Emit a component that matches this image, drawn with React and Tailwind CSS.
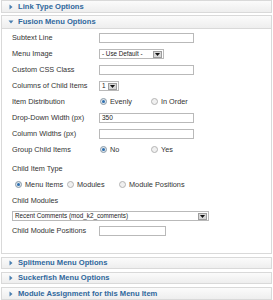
import React from 'react';

const font = { fontFamily: '"Liberation Sans", Arial, sans-serif' };

const Arrow = ({ open }) => (
  <svg width="6" height="6" viewBox="0 0 6 6" className="shrink-0">
    {open ? <path d="M0.5 1.5 H5.5 L3 4.5 Z" fill="#4a7fb0" /> : <path d="M1.5 0.5 V5.5 L4.5 3 Z" fill="#4a7fb0" />}
  </svg>
);

const Header = ({ title, open, className = '' }) => (
  <div className={`flex items-center gap-[4px] pl-[6px] border border-[#d9d9d9] bg-gradient-to-b from-[#fbfbfb] to-[#eeeeee] ${className}`}>
    <Arrow open={open} />
    <span className="text-[7.6px] font-bold text-[#2f689c] leading-none whitespace-nowrap">{title}</span>
  </div>
);

const Input = ({ value = '', w = 'w-[95px]' }) => (
  <div className={`${w} h-[10px] border border-[#b9b9b9] bg-white flex items-center pl-[2px] text-[6.5px] text-[#222] leading-none`}>{value}</div>
);

const Select = ({ text, w }) => (
  <div className={`${w} h-[10px] border border-[#b9b9b9] bg-white flex items-center justify-between pl-[2px] pr-[1px] leading-none`}>
    <span className="text-[6.3px] text-[#222] whitespace-nowrap">{text}</span>
    <span className="w-[9px] h-[7px] bg-[#d8d8d8] border border-[#9d9d9d] flex items-center justify-center">
      <svg width="5" height="3" viewBox="0 0 5 3"><path d="M0 0 H5 L2.5 3 Z" fill="#111" /></svg>
    </span>
  </div>
);

const Radio = ({ checked, label }) => (
  <div className="flex items-center gap-[3px] whitespace-nowrap">
    <span className={`shrink-0 w-[7px] h-[7px] rounded-full border flex items-center justify-center ${checked ? 'border-[#8a9aa8] bg-[#dfe6ec]' : 'border-[#b4b4b4] bg-[#f0f0f0]'}`}>
      {checked && <span className="w-[3px] h-[3px] rounded-full bg-[#2d6fb0]" />}
    </span>
    <span className="text-[7.3px] text-[#333] leading-none">{label}</span>
  </div>
);

const Row = ({ label, children }) => (
  <div className="flex items-center h-[16px]">
    <div className="w-[87px] text-[7.3px] text-[#333] leading-none whitespace-nowrap">{label}</div>
    {children}
  </div>
);

const RadioPair = ({ a, b, checkedFirst = true }) => (
  <div className="flex items-center pl-[1px]">
    <div className="w-[51px]"><Radio checked={checkedFirst} label={a} /></div>
    <Radio checked={!checkedFirst} label={b} />
  </div>
);

export default function App() {
  return (
    <div className="w-[273px] h-[300px] bg-white overflow-hidden px-[1px]" style={font}>
      <Header title="Link Type Options" className="h-[13px]" />
      <Header title="Fusion Menu Options" open className="h-[14px] mt-[2px]" />
      <div className="border border-t-0 border-[#d9d9d9] pl-[10px] pt-[1px] pb-[14px]">
        <Row label="Subtext Line"><Input /></Row>
        <Row label="Menu Image"><Select text="- Use Default -" w="w-[65px]" /></Row>
        <Row label="Custom CSS Class"><Input /></Row>
        <Row label="Columns of Child Items"><Select text="1" w="w-[20px]" /></Row>
        <Row label="Item Distribution"><RadioPair a="Evenly" b="In Order" /></Row>
        <Row label="Drop-Down Width (px)"><Input value="350" /></Row>
        <Row label="Column Widths (px)"><Input /></Row>
        <Row label="Group Child Items"><RadioPair a="No" b="Yes" /></Row>
        <div className="h-[16px] mt-[3px] flex items-center text-[7.3px] text-[#333] leading-none">Child Item Type</div>
        <div className="h-[16px] flex items-center pl-[3px]">
          <div className="w-[52px] shrink-0"><Radio checked label="Menu Items" /></div>
          <div className="w-[52px] shrink-0"><Radio label="Modules" /></div>
          <Radio label="Module Positions" />
        </div>
        <div className="h-[16px] flex items-center text-[7.3px] text-[#333] leading-none">Child Modules</div>
        <div className="h-[14px] flex items-center">
          <Select text="Recent Comments (mod_k2_comments)" w="w-[197px]" />
        </div>
        <Row label="Child Module Positions"><Input w="w-[67px]" /></Row>
      </div>
      <Header title="Splitmenu Menu Options" className="h-[12px] mt-[3px]" />
      <Header title="Suckerfish Menu Options" className="h-[12px] mt-[3px]" />
      <Header title="Module Assignment for this Menu Item" className="h-[13px] mt-[3px]" />
    </div>
  );
}
